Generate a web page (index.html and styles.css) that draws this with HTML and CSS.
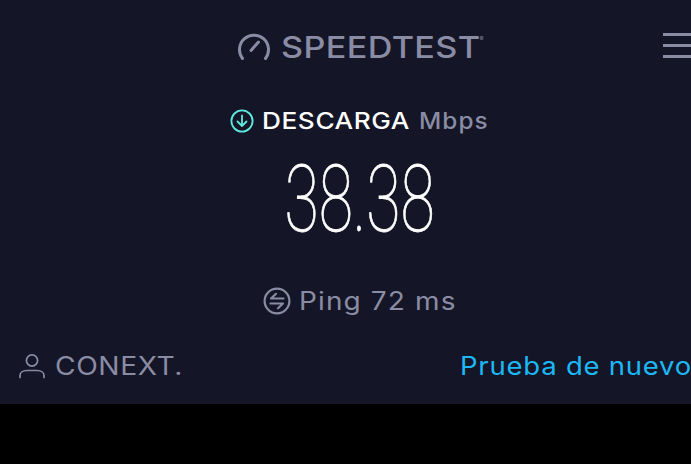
FILE: index.html
```html
<!DOCTYPE html>
<html lang="en">
<head>
    <meta charset="UTF-8">
    <meta name="viewport" content="width=device-width, initial-scale=1.0">
    <title>Speedtest</title>
    <link rel="stylesheet" href="styles.css">
</head>
<body>
    <div class="app">
        <header class="header">
            <div class="brand">
                <svg class="brand-icon" viewBox="0 0 34 30" fill="none" stroke="#8a8ca3" stroke-width="3" stroke-linecap="round">
                    <path d="M5.5 26.5 A14.5 14.5 0 1 1 28.5 26.5"/>
                    <path d="M14 18.5 L21.5 10"/>
                </svg>
                <span class="brand-name">SPEEDTEST</span><span class="brand-mark">®</span>
            </div>
            <div class="menu"><span></span><span></span><span></span></div>
        </header>

        <div class="label-row">
            <svg class="down-icon" viewBox="0 0 24 24" fill="none" stroke="#5fe8e0" stroke-width="1.8" stroke-linecap="round" stroke-linejoin="round">
                <circle cx="12" cy="12" r="10.6"/>
                <path d="M12 6.5 V17 M7.5 12.5 L12 17 L16.5 12.5"/>
            </svg>
            <span class="label-main">DESCARGA</span>
            <span class="label-unit">Mbps</span>
        </div>

        <div class="speed"><span class="speed-value">38.38</span></div>

        <div class="ping">
            <svg class="ping-icon" viewBox="0 0 28 28" fill="none" stroke="#8a8ca3" stroke-width="2.2" stroke-linecap="round" stroke-linejoin="round">
                <circle cx="14" cy="14" r="12.4"/>
                <path d="M20.5 11.5 H8 L13 6.8 M7.5 16.5 H20 L15 21.2"/>
            </svg>
            <span class="ping-text">Ping 72 ms</span>
        </div>

        <div class="footer">
            <div class="provider">
                <svg class="user-icon" viewBox="0 0 26 26" fill="none" stroke="#8a8ca3" stroke-width="1.7" stroke-linecap="round">
                    <circle cx="13" cy="7.5" r="5.6"/>
                    <path d="M1 24.5 V22.5 C1 19.5 4 17.5 8 17.5 H18 C22 17.5 25 19.5 25 22.5 V24.5"/>
                </svg>
                <span class="provider-name">CONEXT.</span>
            </div>
            <a class="retry">Prueba de nuevo</a>
        </div>
    </div>
</body>
</html>
```

FILE: styles.css
```css
html, body {
    margin: 0;
    padding: 0;
    height: 100%;
    background-color: #000;
    overflow: hidden;
}

body {
    font-family: Inter, "Liberation Sans", sans-serif;
}

/* wider than the window, the right side gets cut off */
.app {
    position: relative;
    width: 720px;
    height: 404px;
    background-color: #141526;
    display: flex;
    flex-direction: column;
    align-items: center;
    overflow: hidden;
}

/* stretched text: the original typeface is wider than anything installed */
.brand-name,
.label-main,
.label-unit,
.ping-text,
.provider-name,
.retry {
    display: inline-block;
    transform-origin: left center;
}

.header {
    width: 100%;
    height: 64px;
    padding-top: 30px;
    box-sizing: border-box;
    display: flex;
    justify-content: center;
}

.brand {
    display: flex;
    align-items: flex-start;
    height: 34px;
    color: #8a8ca3;
}

.brand-icon {
    width: 34px;
    height: 30px;
    margin-top: 2px;
    margin-right: 10px;
}

.brand-name {
    font-size: 30px;
    font-weight: 500;
    line-height: 34px;
    letter-spacing: 0.3px;
    margin-right: 24px;
    transform: scaleX(1.14);
}

.brand-mark {
    font-size: 6px;
    line-height: 14px;
    margin-top: 2px;
}

.menu {
    position: absolute;
    right: 0;
    top: 33px;
    width: 57px;
    display: flex;
    flex-direction: column;
    gap: 8px;
}

.menu span {
    height: 3px;
    background-color: #8a8ca3;
}

.label-row {
    display: flex;
    align-items: center;
    height: 34px;
    margin-top: 40px;
    font-size: 23px;
}

.down-icon {
    width: 24px;
    height: 24px;
    margin-right: 8px;
}

.label-main {
    color: #fff;
    font-weight: 500;
    letter-spacing: 0.5px;
    margin-right: 18px;
    transform: scaleX(1.14);
}

.label-unit {
    margin-left: 9px;
    margin-right: 5px;
    color: #8a8ca3;
    font-weight: 500;
    letter-spacing: 1px;
    transform: scaleX(1.06);
}

.speed {
    height: 98px;
    margin-top: 13px;
    display: flex;
    justify-content: center;
    align-items: center;
}

.speed-value {
    display: block;
    font-family: Roboto, sans-serif;
    font-weight: 100;
    font-size: 92px;
    line-height: 98px;
    color: #fff;
    -webkit-text-stroke: 0.8px #fff;
    transform: scaleX(0.68);
}

.ping {
    display: flex;
    align-items: center;
    height: 30px;
    margin-top: 37px;
    font-size: 25px;
    color: #8a8ca3;
}

.ping-icon {
    width: 28px;
    height: 28px;
    margin-right: 8px;
}

.ping-text {
    letter-spacing: 1px;
    margin-right: 17px;
    transform: scaleX(1.12);
}

.footer {
    width: 100%;
    height: 40px;
    margin-top: 30px;
    display: flex;
    align-items: center;
    white-space: nowrap;
    font-size: 25px;
}

.provider {
    display: flex;
    align-items: center;
    padding-left: 19px;
    color: #8a8ca3;
    width: 460px;
    box-sizing: border-box;
    flex-shrink: 0;
}

.user-icon {
    width: 26px;
    height: 26px;
    margin-right: 10px;
}

.provider-name {
    letter-spacing: 0.5px;
    transform: scaleX(1.13);
}

.retry {
    color: #1cb8f5;
    letter-spacing: 0.7px;
    transform: scaleX(1.1);
}
```
